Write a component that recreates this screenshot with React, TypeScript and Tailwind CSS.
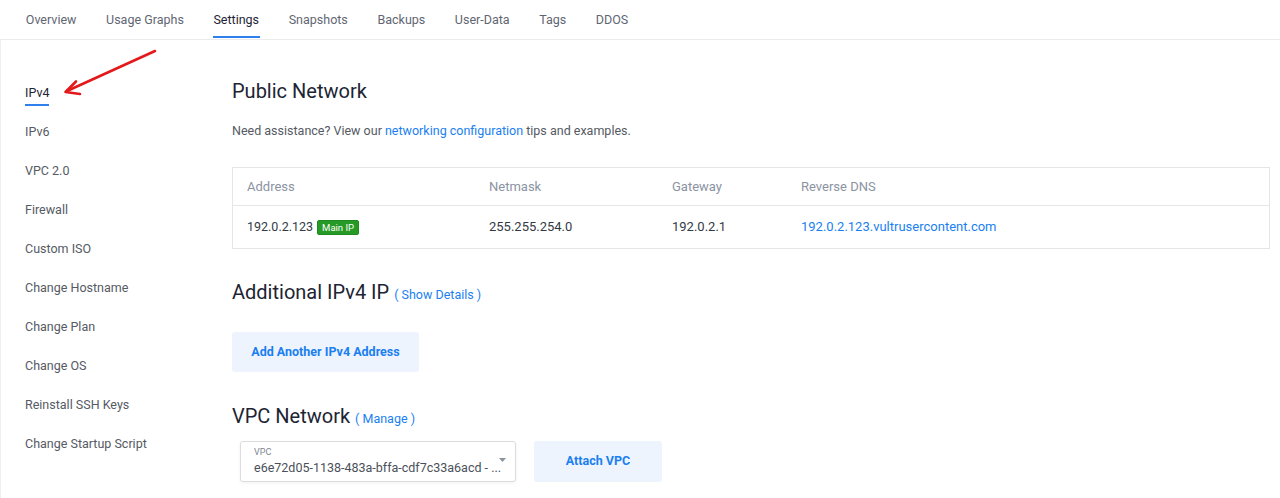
import React from 'react';

const tabs = ['Overview', 'Usage Graphs', 'Settings', 'Snapshots', 'Backups', 'User-Data', 'Tags', 'DDOS'];

const sideItems = [
  'IPv4',
  'IPv6',
  'VPC 2.0',
  'Firewall',
  'Custom ISO',
  'Change Hostname',
  'Change Plan',
  'Change OS',
  'Reinstall SSH Keys',
  'Change Startup Script',
];

export default function App() {
  return (
    <div
      className="relative w-[1280px] h-[498px] overflow-hidden bg-white text-[12.5px] text-[#333]"
      style={{ fontFamily: 'Roboto, "Liberation Sans", Arial, sans-serif' }}
    >
      {/* Tab bar */}
      <div className="flex h-[40px] border-b border-[#ebebeb] pl-[11px]">
        {tabs.map((t) => (
          <div key={t} className="relative flex items-center px-[14.8px] pt-[2px]">
            <span className={t === 'Settings' ? 'text-[#1d2433]' : 'text-[#5f6673]'}>{t}</span>
            {t === 'Settings' && (
              <div className="absolute left-[14px] right-[14px] bottom-[1px] h-[2px] bg-[#2f80ed]" />
            )}
          </div>
        ))}
      </div>

      <div className="flex border-l border-[#eeeeee] h-[458px]">
        {/* Sidebar */}
        <div className="w-[231px] shrink-0 pl-[24px] pt-[33px]">
          {sideItems.map((s) => (
            <div key={s} className="flex h-[39px] items-center">
              <span
                className={
                  s === 'IPv4'
                    ? 'relative leading-[20px] text-[#1d2433]'
                    : 'leading-[20px] text-[#555a63]'
                }
              >
                {s}
                {s === 'IPv4' && (
                  <span className="absolute left-0 right-0 -bottom-[3px] h-[2px] bg-[#2f80ed]" />
                )}
              </span>
            </div>
          ))}
        </div>

        {/* Content */}
        <div className="flex-1 pt-[37px] pr-[10px]">
          <h2 className="text-[20px] leading-[28px] text-[#1d2433]">Public Network</h2>
          <p className="mt-[16px] leading-[20px] text-[#555a63]">
            Need assistance? View our <span className="text-[#1a7ff0]">networking configuration</span> tips and
            examples.
          </p>

          <div className="mt-[26px] border border-[#e6e6e6] text-[13px]">
            <div className="grid grid-cols-[242px_183px_129px_1fr] h-[38px] items-center border-b border-[#e6e6e6] text-[#8b93a3]">
              <div className="pl-[14px]">Address</div>
              <div className="pl-[14px]">Netmask</div>
              <div className="pl-[14px]">Gateway</div>
              <div className="pl-[14px]">Reverse DNS</div>
            </div>
            <div className="grid grid-cols-[242px_183px_129px_1fr] h-[42px] items-center text-[#333a45]">
              <div className="pl-[14px] flex items-center gap-[4px]">
                <span className="text-[12.5px]">192.0.2.123</span>
                <span className="rounded-[2px] border border-[#1f8a1f] bg-[#269926] px-[4px] text-[9.5px] leading-[13px] text-white">
                  Main IP
                </span>
              </div>
              <div className="pl-[14px]">255.255.254.0</div>
              <div className="pl-[14px]">192.0.2.1</div>
              <div className="pl-[14px] text-[#1a7ff0]">192.0.2.123.vultrusercontent.com</div>
            </div>
          </div>

          <div className="mt-[29px] flex items-baseline gap-[5px]">
            <h2 className="text-[20px] leading-[28px] text-[#1d2433]">Additional IPv4 IP</h2>
            <span className="text-[#1a7ff0]">( Show Details )</span>
          </div>

          <button className="mt-[26px] h-[40px] w-[187px] rounded-[3px] bg-[#eef4fe] text-[12.5px] font-bold text-[#1a7ff0]">
            Add Another IPv4 Address
          </button>

          <div className="mt-[30px] flex items-baseline gap-[5px]">
            <h2 className="text-[20px] leading-[28px] text-[#1d2433]">VPC Network</h2>
            <span className="text-[#1a7ff0]">( Manage )</span>
          </div>

          <div className="mt-[11px] flex gap-[18px] pl-[8px]">
            <div className="relative h-[41px] w-[276px] rounded-[3px] border border-[#dcdcdc] bg-white pl-[13px] pt-[5px] shadow-[0_1px_3px_rgba(0,0,0,0.06)]">
              <div className="text-[9px] leading-[11px] text-[#7d8593]">VPC</div>
              <div className="whitespace-nowrap leading-[20px] text-[#4a505a]">
                e6e72d05-1138-483a-bffa-cdf7c33a6acd - ...
              </div>
              <svg className="absolute right-[9px] top-[16px]" width="7" height="4" viewBox="0 0 7 4">
                <path d="M0 0 L7 0 L3.5 4 Z" fill="#8d93a0" />
              </svg>
            </div>
            <button className="h-[41px] w-[128px] rounded-[3px] bg-[#eef4fe] text-[12.5px] font-bold text-[#1a7ff0]">
              Attach VPC
            </button>
          </div>
        </div>
      </div>

      {/* Annotation arrow */}
      <svg className="absolute left-0 top-0 pointer-events-none" width="200" height="120" viewBox="0 0 200 120">
        <line x1="155" y1="51" x2="67" y2="91" stroke="#e3191b" strokeWidth="2.6" strokeLinecap="round" />
        <polyline
          points="76,81.5 65.5,92 80,94"
          fill="none"
          stroke="#e3191b"
          strokeWidth="2.6"
          strokeLinecap="round"
          strokeLinejoin="round"
        />
      </svg>
    </div>
  );
}
